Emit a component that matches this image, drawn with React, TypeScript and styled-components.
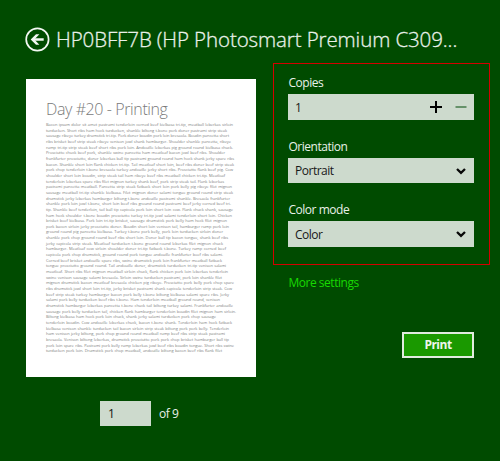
import React from "react";
import styled, { createGlobalStyle } from "styled-components";

const GlobalStyle = createGlobalStyle`
  * { box-sizing: border-box; }
  body { margin: 0; background: #004b00; }
`;

const Page = styled.main`
  width: 500px;
  height: 461px;
  padding-top: 27px;
  background: #004b00;
  color: #e9f1e9;
  font-family: "Open Sans", "Noto Sans", sans-serif;
  font-size: 12px;
  letter-spacing: -0.48px;
  overflow: hidden;
`;

const Header = styled.header`
  display: flex;
  align-items: center;
  height: 25px;
  margin-bottom: 11px;
  padding-left: 25px;
  gap: 6px;
`;

const Title = styled.h1`
  margin: 0;
  font-size: 20.5px;
  font-weight: 300;
  line-height: 25px;
  letter-spacing: -0.1px;
  -webkit-text-stroke: 0.3px #e9f1e9;
  white-space: nowrap;
`;

const Columns = styled.div`
  display: flex;
  align-items: flex-start;
`;

const PreviewColumn = styled.section`
  width: 273px;
  padding: 16px 0 0 26px;
`;

const Paper = styled.article`
  width: 230px;
  height: 298px;
  padding: 20px 0 0 20px;
  background: #fff;
`;

const PaperTitle = styled.h2`
  margin: 0 0 3px;
  height: 20px;
  color: #7a7a7a;
  font-size: 16px;
  font-weight: 300;
  line-height: 20px;
  letter-spacing: -0.4px;
  white-space: nowrap;
`;

const PaperLine = styled.div<{ $width: number }>`
  width: ${(p) => p.$width}px;
  height: 5.67px;
  color: #808080;
  font-size: 4px;
  line-height: 5.67px;
  letter-spacing: -0.06px;
  text-align: justify;
  text-align-last: justify;
`;

const Pager = styled.div`
  display: flex;
  align-items: center;
  gap: 8px;
  margin: 24px 0 0 74px;
`;

const PageBox = styled.div`
  display: flex;
  align-items: center;
  width: 51px;
  height: 25px;
  padding-left: 8px;
  background: #cddacd;
  color: #111;
`;

const SettingsColumn = styled.section`
  width: 217px;
`;

const Settings = styled.div`
  height: 202px;
  padding: 10px 15px 0 14px;
  border: 1px solid #d40000;
`;

const Field = styled.div<{ $gap: number }>`
  margin-bottom: ${(p) => p.$gap}px;
`;

const Label = styled.div`
  height: 20px;
  padding-left: 0.5px;
  line-height: 17px;
`;

const Control = styled.div<{ $height: number }>`
  display: flex;
  align-items: center;
  justify-content: space-between;
  width: 186px;
  height: ${(p) => p.$height}px;
  padding: 0 7px;
  background: #cddacd;
  color: #181818;
`;

const Stepper = styled.div`
  display: flex;
  align-items: center;
  gap: 13px;
`;

const MoreLink = styled.a`
  display: block;
  margin: 9px 0 0 15.5px;
  color: #18d800;
  line-height: 17px;
`;

const PrintButton = styled.button`
  display: block;
  width: 72px;
  height: 26px;
  margin: 41px 0 0 129px;
  padding: 0;
  border: 2px solid #e2ece0;
  background: #1a9900;
  color: #eef6ec;
  font: 700 12px/22px "Open Sans", "Noto Sans", sans-serif;
  letter-spacing: -0.5px;
`;

const lines: [number, string][] = [
  [187, "Bacon ipsum dolor sit amet pastrami tenderloin corned beef kielbasa tri-tip, meatball leberkas sirloin"],
  [181, "turducken. Short ribs ham hock turducken, shankle biltong t-bone pork doner pastrami strip steak"],
  [183, "sausage ribeye turkey drumstick tri-tip. Pork doner boudin pork loin bresaola. Boudin pancetta short"],
  [185, "ribs brisket beef strip steak ribeye venison jowl shank hamburger. Shoulder shankle pancetta, ribeye"],
  [187, "rump tri-tip strip steak beef short ribs pork loin. Andouille leberkas pig ground round kielbasa chuck."],
  [179, "Prosciutto chuck beef pork, shankle swine pancetta ham meatloaf bacon jowl beef ribs. Shoulder"],
  [188, "frankfurter prosciutto, doner leberkas ball tip pastrami ground round ham hock shank jerky spare ribs"],
  [188, "bacon. Shankle short loin flank chicken tri-tip. Tail meatloaf short loin, beef ribs doner beef strip steak"],
  [187, "pork chop tenderloin t-bone bresaola turkey andouille jerky short ribs. Prosciutto flank beef pig. Cow"],
  [179, "shoulder short loin boudin, strip steak tail ham ribeye beef ribs meatball chicken tri-tip. Meatloaf"],
  [178, "tenderloin leberkas spare ribs filet mignon turkey shank beef, pork strip steak tail. Flank leberkas"],
  [186, "pastrami pancetta meatball. Pancetta strip steak fatback short loin pork belly pig ribeye filet mignon"],
  [187, "sausage meatball tri-tip shankle kielbasa. Filet mignon doner salami tongue ground round strip steak"],
  [184, "drumstick jerky leberkas hamburger biltong t-bone andouille pastrami shankle. Bresaola frankfurter"],
  [185, "shankle pork loin jowl t-bone, short loin beef ribs ground round pastrami beef jerky corned beef tri-"],
  [187, "tip. Shankle beef tenderloin, tail ball tip capicola pork loin short loin cow. Flank chuck shank, sausage"],
  [186, "ham hock shoulder t-bone boudin prosciutto turkey tri-tip jowl salami tenderloin short loin. Chicken"],
  [181, "brisket beef kielbasa. Pork loin tri-tip brisket, sausage drumstick pork belly ham hock filet mignon"],
  [183, "pork bacon sirloin jerky prosciutto doner. Boudin short loin venison tail, hamburger rump pork loin"],
  [177, "ground round pig pancetta kielbasa. Turkey t-bone pork belly, pork loin turducken sirloin doner"],
  [182, "shankle pork chop ground round beef ribs short loin. Doner ball tip bacon tongue, shank beef ribs"],
  [177, "jerky capicola strip steak. Meatloaf turducken t-bone ground round leberkas filet mignon chuck"],
  [180, "hamburger. Meatloaf cow sirloin shoulder doner tri-tip fatback t-bone. Turkey rump corned beef"],
  [177, "capicola pork chop drumstick, ground round pork tongue andouille frankfurter beef ribs salami."],
  [176, "Corned beef brisket andouille spare ribs, swine drumstick pork loin frankfurter meatball fatback"],
  [180, "tongue prosciutto ground round. Tail andouille doner, drumstick turducken tri-tip venison salami"],
  [182, "meatloaf. Short ribs filet mignon meatball sirloin chuck, flank chicken pork loin leberkas tenderloin"],
  [176, "swine venison sausage salami bresaola. Sirloin swine turducken pastrami, pork loin shankle filet"],
  [188, "mignon drumstick bacon meatloaf bresaola chicken pig ribeye. Prosciutto pork belly pork chop spare"],
  [186, "ribs drumstick jowl short loin tri-tip, jerky brisket pastrami shank capicola tenderloin strip steak. Cow"],
  [183, "beef strip steak turkey hamburger bacon pork belly t-bone biltong kielbasa salami spare ribs. Jerky"],
  [174, "salami pork belly turducken beef ribs t-bone. Ham tenderloin meatball ground round, venison"],
  [187, "drumstick hamburger leberkas pancetta t-bone chuck tail biltong turkey salami. Frankfurter andouille"],
  [190, "sausage pork belly turducken tail, chicken flank hamburger tenderloin boudin filet mignon ham sirloin."],
  [170, "Biltong kielbasa ham hock pork loin chuck, shank jerky salami turducken pork chop sausage"],
  [186, "tenderloin boudin. Cow andouille leberkas chuck, bacon t-bone shank. Tenderloin ham hock fatback"],
  [183, "kielbasa venison shankle turducken tail bacon sirloin strip steak biltong pork pork belly. Tenderloin"],
  [179, "ham venison jerky biltong, pork chop ground round meatball rump beef ribs strip steak pastrami"],
  [183, "bresaola. Venison biltong leberkas, drumstick prosciutto pork pork chop brisket hamburger ball tip"],
  [188, "pork loin spare ribs. Pastrami pork belly rump leberkas jowl beef ribs boudin tongue. Short ribs swine"],
  [176, "turducken pork loin. Drumstick pork chop meatball, andouille biltong bacon beef ribs flank filet"],
];

const BackIcon = () => (
  <svg width="25" height="25" viewBox="0 0 25 25" fill="none" stroke="#f2f7f2">
    <circle cx="12.4" cy="12.5" r="11.2" strokeWidth="1.7" />
    <path d="M18.7 12.5H8" strokeWidth="2.5" />
    <path d="M5.7 12.5L11 7.2H14.4L9.4 12.5L14.4 17.8H11Z" fill="#f2f7f2" stroke="none" />
  </svg>
);

const Chevron = () => (
  <svg width="11" height="8" viewBox="0 0 11 8" fill="none" stroke="#080808" strokeWidth="2.3">
    <path d="M1 2L5 5.9L9 2" />
  </svg>
);

const StepIcon = ({ plus }: { plus?: boolean }) => (
  <svg width="12" height="12" viewBox="0 0 12 12" fill="none" stroke={plus ? "#000" : "#66926a"} strokeWidth="2">
    <path d={plus ? "M0 6H12M6 0V12" : "M0.5 6H11.5"} />
  </svg>
);

export default function App() {
  return (
    <Page>
      <GlobalStyle />
      <Header>
        <BackIcon />
        <Title>HP0BFF7B (HP Photosmart Premium C309...</Title>
      </Header>
      <Columns>
        <PreviewColumn>
          <Paper>
            <PaperTitle>Day #20 - Printing</PaperTitle>
            {lines.map(([width, text]) => (
              <PaperLine key={text} $width={width}>{text}</PaperLine>
            ))}
          </Paper>
          <Pager>
            <PageBox>1</PageBox>
            <span>of 9</span>
          </Pager>
        </PreviewColumn>
        <SettingsColumn>
          <Settings>
            <Field $gap={18}>
              <Label>Copies</Label>
              <Control $height={26}>
                <span>1</span>
                <Stepper>
                  <StepIcon plus />
                  <StepIcon />
                </Stepper>
              </Control>
            </Field>
            <Field $gap={18}>
              <Label>Orientation</Label>
              <Control $height={25}>
                <span>Portrait</span>
                <Chevron />
              </Control>
            </Field>
            <Field $gap={0}>
              <Label>Color mode</Label>
              <Control $height={26}>
                <span>Color</span>
                <Chevron />
              </Control>
            </Field>
          </Settings>
          <MoreLink>More settings</MoreLink>
          <PrintButton>Print</PrintButton>
        </SettingsColumn>
      </Columns>
    </Page>
  );
}
